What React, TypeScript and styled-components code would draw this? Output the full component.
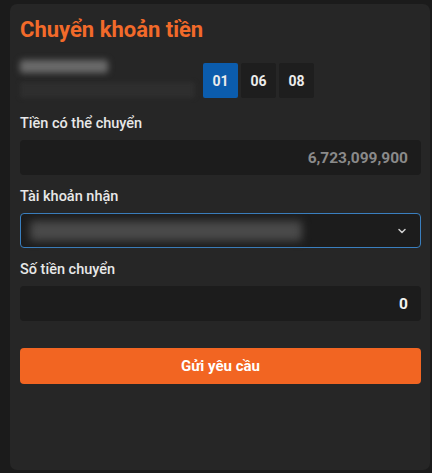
import React from "react";
import styled, { createGlobalStyle } from "styled-components";
import { ChevronDown } from "lucide-react";

const GlobalStyle = createGlobalStyle`
	html, body {
		margin: 0;
		padding: 0;
		background: #1b1b1b;
		font-family: Roboto, "Noto Sans", Arial, sans-serif;
	}
	* {
		box-sizing: border-box;
	}
`;

const Page = styled.div`
	padding: 4px 2px 3px 10px;
	height: 473px;
`;

const Card = styled.div`
	background: #262626;
	border-radius: 7px;
	height: 466px;
	padding: 12px 9px 0 10px;
`;

const Title = styled.h1`
	margin: 0;
	font-size: 22px;
	line-height: 28px;
	font-weight: 700;
	color: #f26a2a;
`;

const AccountRow = styled.div`
	display: flex;
	align-items: flex-end;
	gap: 8px;
	margin-top: 11px;
`;

const Masked = styled.div`
	width: 175px;
	height: 43px;
	display: flex;
	flex-direction: column;
	justify-content: space-between;
	padding-top: 5px;
`;

// censored account number in the reference: drawn as blurred blocks
const Smudge = styled.div<{ $w: number; $h: number; $color: string; $blur: number }>`
	width: ${(p) => p.$w}px;
	height: ${(p) => p.$h}px;
	background: ${(p) => p.$color};
	border-radius: 3px;
	filter: blur(${(p) => p.$blur}px);
`;

const Pills = styled.div`
	display: flex;
	gap: 3px;
`;

const Pill = styled.button<{ $active?: boolean }>`
	width: 35px;
	height: 35px;
	border: none;
	border-radius: 2px;
	background: ${(p) => (p.$active ? "#0b5cad" : "#1e1e1e")};
	color: #ececec;
	font-family: inherit;
	font-size: 14px;
	font-weight: 700;
	padding: 0;
`;

const FieldLabel = styled.div<{ $first?: boolean }>`
	margin: ${(p) => (p.$first ? "16px" : "12px")} 0 6px;
	font-size: 14.5px;
	line-height: 20px;
	font-weight: 500;
	color: #e8e8e8;
`;

const ValueBox = styled.div<{ $muted?: boolean }>`
	height: 35px;
	border-radius: 4px;
	background: #1c1c1c;
	display: flex;
	align-items: center;
	justify-content: flex-end;
	padding-right: 13px;
	font-size: 15.5px;
	font-weight: 700;
	color: ${(p) => (p.$muted ? "#8a8a8a" : "#f2f2f2")};
`;

const SelectBox = styled.div`
	height: 35px;
	border-radius: 4px;
	background: #1c1c1c;
	border: 1.5px solid #3a7fbf;
	display: flex;
	align-items: center;
	justify-content: space-between;
	padding: 0 12px 0 9px;
	color: #cfcfcf;
`;

const SubmitButton = styled.button`
	margin-top: 27px;
	width: 100%;
	height: 36px;
	border: none;
	border-radius: 4px;
	background: #f26522;
	color: #fff;
	font-family: inherit;
	font-size: 15px;
	font-weight: 700;
`;

const App = () => {
	return (
		<Page>
			<GlobalStyle />
			<Card>
				<Title>Chuyển khoản tiền</Title>
				<AccountRow>
					<Masked>
						<Smudge $w={88} $h={13} $color="#6a6a6a" $blur={3} />
						<Smudge $w={175} $h={16} $color="#2e2e2e" $blur={2} />
					</Masked>
					<Pills>
						<Pill $active>01</Pill>
						<Pill>06</Pill>
						<Pill>08</Pill>
					</Pills>
				</AccountRow>

				<FieldLabel $first>Tiền có thể chuyển</FieldLabel>
				<ValueBox $muted>6,723,099,900</ValueBox>

				<FieldLabel>Tài khoản nhận</FieldLabel>
				<SelectBox>
					<Smudge $w={272} $h={20} $color="#4a4a4a" $blur={4} />
					<ChevronDown size={12} strokeWidth={3} />
				</SelectBox>

				<FieldLabel>Số tiền chuyển</FieldLabel>
				<ValueBox>0</ValueBox>

				<SubmitButton>Gửi yêu cầu</SubmitButton>
			</Card>
		</Page>
	);
};

export default App;
